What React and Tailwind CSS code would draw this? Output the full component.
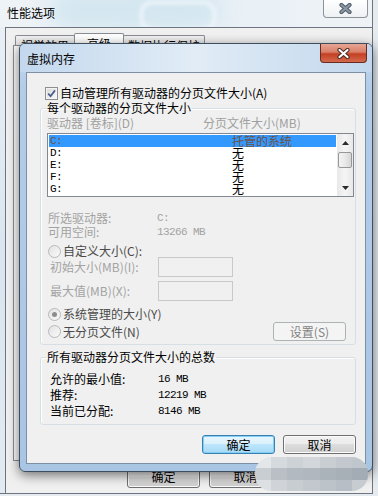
const CJK = "font-['Noto_Sans_CJK_SC','Noto_Sans',sans-serif]";
const MONO = "font-['Liberation_Mono','Noto_Sans_CJK_SC',monospace] text-[11px] tracking-[-0.6px]";

const drives = [
  ['C:', '托管的系统'],
  ['D:', '无'],
  ['E:', '无'],
  ['F:', '无'],
  ['G:', '无'],
];

const mosaic = [
  ['bg-[#e4e7ea]', 'bg-[#d5dadf]', 'bg-[#cdd2d7]', 'bg-[#d3d7db]', 'bg-[#c9ced3]', 'bg-[#c2c8ce]', 'bg-[#bfc6cc]'],
  ['bg-[#c9ced3]', 'bg-[#b9bfc5]', 'bg-[#b3b9c0]', 'bg-[#b0b7be]', 'bg-[#aab2ba]', 'bg-[#a7afb7]', 'bg-[#a3acb5]'],
  ['bg-[#dde0e3]', 'bg-[#d0d4d8]', 'bg-[#c8cdd2]', 'bg-[#c3c8ce]', 'bg-[#bcc3c9]', 'bg-[#b7bec5]', 'bg-[#c7ccd1]'],
];

function CloseGlyph({ color, outline }) {
  return (
    <svg width="13" height="11" viewBox="0 0 13 11">
      <path d="M2.5 2 L10.5 9 M10.5 2 L2.5 9" stroke={outline} strokeWidth="4.2" strokeLinecap="round" />
      <path d="M2.5 2 L10.5 9 M10.5 2 L2.5 9" stroke={color} strokeWidth="2.2" strokeLinecap="round" />
    </svg>
  );
}

function Checkbox() {
  return (
    <span className="flex h-[13px] w-[13px] items-center justify-center border border-[#8e8f8f] bg-gradient-to-br from-[#d8d8d8] to-[#fbfbfb] shadow-[inset_0_0_0_1px_#f4f4f4]">
      <svg width="9" height="9" viewBox="0 0 9 9">
        <path d="M1.2 4.6 L3.6 7.2 L8 1.4" fill="none" stroke="#4b5f8c" strokeWidth="1.8" />
      </svg>
    </span>
  );
}

function Radio({ checked }) {
  return (
    <span className="flex h-[13px] w-[13px] shrink-0 items-center justify-center rounded-full border border-[#b9b9b9] bg-gradient-to-br from-[#e2e2e2] to-[#fafafa]">
      {checked && <span className="h-[5px] w-[5px] rounded-full bg-[#8c8c8c]" />}
    </span>
  );
}

function Btn({ children, kind = 'normal', className = '' }) {
  const look = {
    normal:
      'border-[#707070] text-black bg-[linear-gradient(to_bottom,#f2f2f2_0%,#ebebeb_50%,#dddddd_50%,#cfcfcf_100%)] shadow-[inset_0_0_0_1px_#fbfbfb]',
    primary:
      'border-[#3c7fb1] text-black bg-[linear-gradient(to_bottom,#eaf6fd_0%,#d9f0fc_50%,#bee6fd_50%,#a7d9f5_100%)] shadow-[inset_0_0_0_1px_#7fd0f4]',
    disabled: 'border-[#adb2b5] text-[#838383] bg-[#f4f4f4]',
  }[kind];
  return (
    <div className={`flex items-center justify-center rounded-[3px] border ${look} ${className}`}>
      {children}
    </div>
  );
}

function BackWindow() {
  return (
    <div className="flex h-[494px] w-[373px] flex-col border-r border-b border-[#6c7580] bg-[#dfe8f0]">
      <div className="relative flex h-[27px] items-start justify-between overflow-hidden bg-gradient-to-r from-[#eef3f7] via-[#e6eff5] to-[#eff3f7]">
        <div className="absolute left-[50px] top-[-8px] h-[36px] w-[170px] rounded-full bg-[#d3e6f0] blur-[10px]" />
        <div className="absolute left-[140px] top-[1px] h-[30px] w-[76px] rounded-[12px] border-[3px] border-[#f2f8fb] blur-[2px]" />
        <span className="relative pl-[7px] pt-[6px]">性能选项</span>
        <div className="relative mr-[4px] flex h-[18px] w-[45px] items-center justify-center rounded-b-[4px] border border-t-0 border-[#8d939a] bg-gradient-to-b from-[#ffffff] to-[#eef1f4]">
          <CloseGlyph color="#8a96a3" outline="#4e5a68" />
        </div>
      </div>
      <div className="flex flex-1">
        <div className="w-[5px] bg-gradient-to-b from-[#e9eff5] via-[#d9e5ef] to-[#e3eaf1]" />
        <div className="flex flex-1 flex-col border-t border-l border-[#6c7580] bg-[#f0f0f0]">
          <div className="mt-[5px] flex h-[12px] items-end pl-[9px]">
            <div className="h-[10px] rounded-t-[2px] border border-b-0 border-[#898c95] bg-gradient-to-b from-[#f2f2f2] to-[#e3e3e3] px-[5px] leading-[14px]">
              <span className="block pt-[3px]">视觉效果</span>
            </div>
            <div className="-mx-px h-[12px] rounded-t-[2px] border border-b-0 border-[#898c95] bg-white px-[12px] leading-[14px]">
              <span className="block pt-[3px]">高级</span>
            </div>
            <div className="h-[10px] rounded-t-[2px] border border-b-0 border-[#898c95] bg-gradient-to-b from-[#f2f2f2] to-[#e3e3e3] px-[4px] leading-[14px]">
              <span className="block pt-[3px]">数据执行保护</span>
            </div>
          </div>
          <div className="ml-[7px] h-[416px] w-[352px] border border-[#898c95] bg-[#fbfbfb]" />
          <div className="mt-[4px] flex gap-[9px] pl-[121px]">
            <Btn className="h-[23px] w-[73px]">确定</Btn>
            <Btn className="h-[23px] w-[73px]">取消</Btn>
          </div>
        </div>
      </div>
    </div>
  );
}

function ScrollArrow({ up }) {
  return (
    <div className="flex h-[17px] items-center justify-center">
      <svg width="7" height="4" viewBox="0 0 7 4">
        <path d={up ? 'M0 4 L3.5 0 L7 4 Z' : 'M0 0 L3.5 4 L7 0 Z'} fill="#2b2b2b" />
      </svg>
    </div>
  );
}

function DriveList() {
  return (
    <div className="ml-[6px] mt-[3px] flex h-[64px] w-[307px] border border-[#828790] bg-white">
      <div className="flex w-[289px] flex-col p-px">
        {drives.map(([drive, size], i) => (
          <div
            key={drive}
            className={`flex h-[12px] items-center leading-[12px] ${i === 0 ? 'bg-[#3399ff] text-[#6e5244]' : 'text-black'}`}
          >
            <span className={`w-[183px] pl-px ${MONO}`}>{drive}</span>
            <span>{size}</span>
          </div>
        ))}
      </div>
      <div className="flex w-[16px] flex-col bg-gradient-to-r from-[#e8e8e8] via-[#f5f5f5] to-[#e8e8e8]">
        <ScrollArrow up />
        <div className="mx-px mt-px h-[16px] rounded-[2px] border border-[#979797] bg-gradient-to-r from-[#f4f4f4] via-[#e9e9e9] to-[#d6d6d6]" />
        <div className="flex-1" />
        <ScrollArrow />
      </div>
    </div>
  );
}

function Dialog() {
  return (
    <div className="absolute left-[19px] top-[43px] flex h-[429px] w-[354px] flex-col rounded-[6px] border border-[#3e4d5f] bg-[linear-gradient(to_bottom,#c4d9ee,#b3cce8_10%,#a9c5e4)] shadow-[0_3px_12px_rgba(0,0,0,0.55)]">
      <div className="flex h-[28px] items-start justify-between rounded-t-[5px] bg-gradient-to-r from-[#c3d8ee] via-[#e1ecf6] to-[#c2d7ed]">
        <span className="self-center pl-[7px] pt-[1px]">虚拟内存</span>
        <div className="mr-[5px] flex h-[19px] w-[47px] items-center justify-center rounded-b-[4px] border border-t-0 border-[#6b2a1f] bg-[linear-gradient(to_bottom,#e8a593_0%,#d8806a_45%,#c53f22_55%,#d26a4e_100%)]">
          <CloseGlyph color="#ffffff" outline="#4a2a24" />
        </div>
      </div>

      <div className="mx-[6px] flex h-[392px] flex-col border border-[#7d8fa3] bg-[#f0f0f0]">
        <div className="mt-[13px] flex h-[14px] items-center gap-[2px] pl-[18px]">
          <Checkbox />
          <span>自动管理所有驱动器的分页文件大小(A)</span>
        </div>

        <fieldset className="ml-[13px] mt-[1px] w-[316px] rounded-[3px] border border-[#d5dfe5] pb-[3px] shadow-[inset_1px_1px_0_#fff]">
          <legend className="ml-[5px] px-px leading-[14px]">每个驱动器的分页文件大小</legend>
          <div className="mt-px flex h-[14px] items-center pl-[6px] text-[#a0a0a0]">
            <span className="w-[156px]">驱动器 [卷标](D)</span>
            <span>分页文件大小(MB)</span>
          </div>
          <DriveList />

          <div className="mt-[14px] flex h-[14px] items-center pl-[7px] text-[#a3a3a3]">
            <span className="w-[109px]">所选驱动器:</span>
            <span className={MONO}>C:</span>
          </div>
          <div className="flex h-[14px] items-center pl-[7px] text-[#a3a3a3]">
            <span className="w-[109px]">可用空间:</span>
            <span className={MONO}>13266 MB</span>
          </div>

          <div className="mt-[6px] flex h-[12px] items-center gap-[2px] pl-[7px] text-[#4a4a4a]">
            <Radio />
            <span>自定义大小(C):</span>
          </div>
          <div className="flex h-[20px] items-center pl-[9px] text-[#a3a3a3]">
            <span className="w-[108px]">初始大小(MB)(I):</span>
            <div className="h-[20px] w-[75px] border border-[#c9c9c9] bg-[#f0f0f0]" />
          </div>
          <div className="mt-[4px] flex h-[20px] items-center pl-[9px] text-[#a3a3a3]">
            <span className="w-[108px]">最大值(MB)(X):</span>
            <div className="h-[20px] w-[75px] border border-[#c9c9c9] bg-[#f0f0f0]" />
          </div>

          <div className="mt-[6px] flex h-[14px] items-center gap-[2px] pl-[7px] text-[#4a4a4a]">
            <Radio checked />
            <span>系统管理的大小(Y)</span>
          </div>
          <div className="mt-px flex h-[19px] items-center justify-between pl-[7px] pr-[9px]">
            <div className="flex items-center gap-[2px] text-[#4a4a4a]">
              <Radio />
              <span>无分页文件(N)</span>
            </div>
            <Btn kind="disabled" className="h-[19px] w-[73px]">
              设置(S)
            </Btn>
          </div>
        </fieldset>

        <fieldset className="ml-[13px] mt-[5px] w-[316px] rounded-[3px] border border-[#d5dfe5] pb-[5px] shadow-[inset_1px_1px_0_#fff]">
          <legend className="ml-[5px] px-px leading-[14px]">所有驱动器分页文件大小的总数</legend>
          <div className="mt-[7px] flex flex-col pl-[9px]">
            {[
              ['允许的最小值:', '16 MB'],
              ['推荐:', '12219 MB'],
              ['当前已分配:', '8146 MB'],
            ].map(([label, value]) => (
              <div key={label} className="flex h-[16px] items-center">
                <span className="w-[108px]">{label}</span>
                <span className={MONO}>{value}</span>
              </div>
            ))}
          </div>
        </fieldset>

        <div className="mt-[10px] flex justify-end gap-[8px] pr-[9px]">
          <Btn kind="primary" className="h-[19px] w-[73px]">
            确定
          </Btn>
          <Btn className="h-[19px] w-[73px]">取消</Btn>
        </div>
      </div>
    </div>
  );
}

function Mosaic() {
  return (
    <div className="absolute left-[255px] top-[457px] flex h-[34px] w-[113px] flex-col overflow-hidden rounded-[16px] blur-[0.6px]">
      {mosaic.map((row, r) => (
        <div key={r} className="flex flex-1">
          {row.map((cell, c) => (
            <div key={c} className={`flex-1 ${cell}`} />
          ))}
        </div>
      ))}
    </div>
  );
}

export default function App() {
  return (
    <div className={`relative h-[496px] w-[378px] overflow-hidden bg-[#e6ebf0] text-[12px] leading-[14px] text-black ${CJK}`}>
      <BackWindow />
      <Dialog />
      <Mosaic />
    </div>
  );
}
